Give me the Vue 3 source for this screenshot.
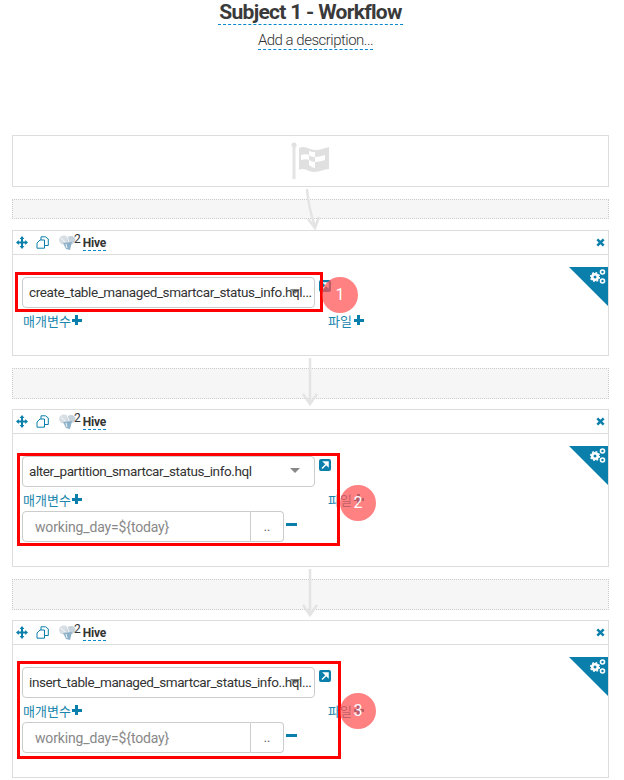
<script setup>
const cards = [
  { id: 1, file: "create_table_managed_smartcar_status_info.hql...", hasParam: false },
  { id: 2, file: "alter_partition_smartcar_status_info.hql", hasParam: true },
  { id: 3, file: "insert_table_managed_smartcar_status_info..hql...", hasParam: true },
];
</script>

<template>
  <div class="page">
    <div class="head">
      <h1 class="title">Subject 1 - Workflow</h1>
      <div class="desc">Add a description...</div>
    </div>

    <div class="start">
      <svg width="40" height="38" viewBox="0 0 40 38" class="flag">
        <circle cx="3" cy="3" r="2.500" fill="#e0e0e0" />
        <rect x="1.500" y="3" width="3" height="34" fill="#e4e4e4" />
        <path d="M8 6c7-3 10 2 16 2 5 0 9-2 14-3v22c-5 0-9 3-15 3-6 0-9-5-15-2z" fill="#e0e0e0" />
        <path d="M10 13c3-1 6-1 8 0v5c-2-1-5-1-8 0zM18 9c2 1 4 1 6 1v5c-2 0-4 0-6-2zM24 15c3 0 6-1 10-2v5c-4 1-7 2-10 2zM18 18c2 1 4 2 6 2v6c-2 0-4-2-6-3z" fill="#fff" />
      </svg>
    </div>

    <template v-for="(card, i) in cards" :key="card.id">
      <div class="drop" :class="i === 0 ? 'drop-first' : 'drop-rest'">
        <svg v-if="i === 0" class="arrow arrow-first" width="20" height="42" viewBox="0 0 20 42">
          <path d="M3 0c1 13 4 26 8 38M4 30l7 9 4-11" fill="none" stroke="#e4e4e4" stroke-width="2.500" />
        </svg>
        <svg v-else class="arrow arrow-rest" width="20" height="48" viewBox="0 0 20 48">
          <path d="M10 0v45M3 36l7 10 7-10" fill="none" stroke="#e4e4e4" stroke-width="2.500" />
        </svg>
      </div>

      <div class="card">
        <div class="card-head">
          <svg class="ico-move" width="12" height="13" viewBox="0 0 12 13">
            <path d="M6 0l2.400 2.900H7v2.700h2.200V4L12 6.500 9.200 9V7.400H7v2.700h1.400L6 13 3.600 10.100H5V7.400H2.800V9L0 6.500 2.800 4v1.600H5V2.900H3.600z" fill="#0b7fab" />
          </svg>
          <svg class="ico-copy" width="13" height="13" viewBox="0 0 13 13">
            <path d="M5 4V.8h4.500l2.800 2.200v6.500H9M1 7l3-3h4.500v8.200H1z" fill="none" stroke="#0b7fab" stroke-width="1" />
          </svg>
          <svg class="ico-hive" width="17" height="15" viewBox="0 0 17 15">
            <ellipse cx="5" cy="5" rx="5" ry="4.500" fill="#d8dfe4" />
            <ellipse cx="12" cy="5" rx="4.500" ry="4" fill="#c6d2db" />
            <path d="M4 8l9-1-2 8-4-1z" fill="#8fb2cb" />
            <path d="M2 3l4 4M8 1l2 6M7 9l1 4" stroke="#f5f7f9" stroke-width="1" />
          </svg>
          <sup class="count">2</sup>
          <span class="hive">Hive</span>
          <span class="close">
            <svg width="9" height="9" viewBox="0 0 9 9">
              <path d="M1.300 1.300l6.400 6.400M7.700 1.300l-6.400 6.400" stroke="#0b7fab" stroke-width="2.500" />
            </svg>
          </span>
        </div>

        <div class="card-body" :class="{ 'no-param': !card.hasParam }">
          <div class="file-row">
            <div class="select">
              <span class="select-text">{{ card.file }}</span>
              <span class="caret"></span>
            </div>
            <span class="link">
              <svg width="12" height="12" viewBox="0 0 12 12">
                <rect width="12" height="12" rx="2" fill="#0b7fab" />
                <path d="M3 9.500L8 4.500M5 3h4v4z" fill="#fff" stroke="#fff" stroke-width="1.500" />
              </svg>
            </span>
          </div>

          <div class="labels">
            <span class="label">매개변수 <b class="plus"></b></span>
            <span class="label label-file">파일 <b class="plus"></b></span>
          </div>

          <div v-if="card.hasParam" class="param">
            <div class="param-input">working_day=${today}</div>
            <div class="param-btn">..</div>
            <span class="minus"></span>
          </div>
        </div>

        <div class="triangle">
          <svg class="gears" width="16" height="16" viewBox="0 0 16 16">
            <circle cx="5" cy="8" r="2.800" fill="none" stroke="#fff" stroke-width="2.600" />
            <circle cx="5" cy="8" r="4.400" fill="none" stroke="#fff" stroke-width="1.400" stroke-dasharray="1.800 1.650" />
            <circle cx="12.500" cy="3" r="2" fill="none" stroke="#fff" stroke-width="1.600" />
            <circle cx="12.500" cy="12" r="2" fill="none" stroke="#fff" stroke-width="1.600" />
          </svg>
        </div>

        <div class="mark" :class="'mark-' + card.id"></div>
        <div class="num" :class="'num-' + card.id">{{ card.id }}</div>
      </div>
    </template>
  </div>
</template>

<style scoped>
.page {
  width: 624px;
  height: 780px;
  overflow: hidden;
  font-family: Roboto, "Noto Sans CJK KR", sans-serif;
  color: #333;
}
.head {
  height: 135px;
  display: flex;
  flex-direction: column;
  align-items: center;
}
.title {
  margin: 1px 0 0 -3px;
  font-size: 21px;
  font-weight: 700;
  letter-spacing: -0.7px;
  line-height: 23px;
  color: #3a3a3a;
  border-bottom: 1px dashed #0088cc;
  padding: 0 1px;
}
.desc {
  margin: 7px 0 0 7px;
  font-size: 15px;
  font-weight: 300;
  letter-spacing: -0.5px;
  line-height: 17px;
  color: #333;
  border-bottom: 1px dashed #0088cc;
}
.start {
  margin-left: 12px;
  width: 595px;
  height: 50px;
  border: 1px solid #ddd;
  display: flex;
  justify-content: center;
  align-items: center;
}
.flag {
  margin-right: -1px;
}
.drop {
  position: relative;
  margin-left: 12px;
  width: 595px;
  background: #f6f6f6;
  border: 1px dotted #ccc;
}
.drop-first {
  height: 18px;
  margin-top: 12px;
  margin-bottom: 11px;
}
.drop-rest {
  height: 29px;
  margin-top: 12px;
  margin-bottom: 10px;
}
.arrow {
  position: absolute;
}
.arrow-first {
  left: 291px;
  top: -11px;
}
.arrow-rest {
  left: 287px;
  top: -11px;
}
.card {
  position: relative;
  margin-left: 12px;
  width: 595px;
  border: 1px solid #ddd;
  background: #fff;
}
.card-head {
  height: 23px;
  border-bottom: 1px solid #ddd;
  display: flex;
  align-items: center;
  padding: 0 3px;
}
.ico-move {
  margin-right: 8px;
}
.ico-copy {
  margin-right: 10px;
}
.count {
  font-size: 12px;
  font-weight: 400;
  line-height: 1;
  margin: -8px 0 0 -2px;
}
.hive {
  font-size: 12px;
  font-weight: 700;
  letter-spacing: -0.2px;
  line-height: 14px;
  margin: 1px 0 0 2px;
  border-bottom: 1px dashed #0088cc;
}
.close {
  margin-left: auto;
  display: flex;
}
.card-body {
  padding: 22px 9px 24px;
}
.card-body.no-param {
  padding-bottom: 25px;
}
.file-row {
  display: flex;
  align-items: flex-start;
}
.select {
  position: relative;
  width: 285px;
  height: 29px;
  border: 1px solid #ccc;
  border-radius: 4px;
  display: flex;
  align-items: center;
  padding-left: 6px;
  font-size: 13.500px;
  letter-spacing: -0.4px;
  color: #333;
  white-space: nowrap;
  overflow: hidden;
}
.select-text {
  position: relative;
  z-index: 1;
  top: -1px;
}
.caret {
  position: absolute;
  left: 267px;
  top: 11px;
  border-top: 5px solid #888;
  border-left: 5px solid transparent;
  border-right: 5px solid transparent;
}
.link {
  display: flex;
  margin-left: 4px;
  margin-top: 3px;
}
.labels {
  display: flex;
  height: 20px;
  margin-top: 2px;
  align-items: center;
  font-size: 13px;
  color: #1a86ad;
}
.label {
  display: flex;
  align-items: center;
  gap: 1px;
  margin-left: 1px;
}
.label-file {
  position: absolute;
  left: 314px;
  gap: 2px;
}
.plus {
  position: relative;
  display: inline-block;
  width: 10px;
  height: 3px;
  background: #0b7fab;
}
.plus::after {
  content: "";
  position: absolute;
  left: 3.500px;
  top: -3.500px;
  width: 3px;
  height: 10px;
  background: #0b7fab;
}
.param {
  display: flex;
  margin-top: 2px;
  align-items: center;
}
.param-input {
  width: 215px;
  height: 29px;
  line-height: 30px;
  border: 1px solid #ccc;
  border-radius: 4px 0 0 4px;
  padding-left: 12px;
  font-size: 14px;
  letter-spacing: -0.15px;
  color: #888;
}
.param-btn {
  width: 32px;
  height: 29px;
  line-height: 31px;
  border: 1px solid #ccc;
  border-left: 0;
  border-radius: 0 4px 4px 0;
  font-size: 12px;
  color: #555;
  text-align: center;
}
.minus {
  width: 11px;
  height: 3px;
  background: #0b7fab;
  margin-left: 2px;
  margin-top: -4px;
}
.triangle {
  position: absolute;
  top: 36px;
  right: 0;
  width: 0;
  height: 0;
  border-top: 39px solid #0b7fab;
  border-left: 39px solid transparent;
}
.gears {
  position: absolute;
  top: -37px;
  right: 2px;
}
.mark {
  position: absolute;
  border: 3px solid #f00;
  box-sizing: border-box;
  pointer-events: none;
}
.mark-1 {
  left: 2px;
  top: 41px;
  width: 308px;
  height: 40px;
}
.mark-2 {
  left: 4px;
  top: 43px;
  width: 323px;
  height: 93px;
}
.mark-3 {
  left: 4px;
  top: 40px;
  width: 324px;
  height: 98px;
}
.num {
  position: absolute;
  width: 36px;
  height: 36px;
  border-radius: 50%;
  background: rgba(255, 80, 80, 0.72);
  color: #fff;
  font-size: 16px;
  line-height: 36px;
  text-align: center;
}
.num-1 {
  left: 309px;
  top: 46px;
}
.num-2 {
  left: 327px;
  top: 75px;
}
.num-3 {
  left: 327px;
  top: 72px;
}
</style>
